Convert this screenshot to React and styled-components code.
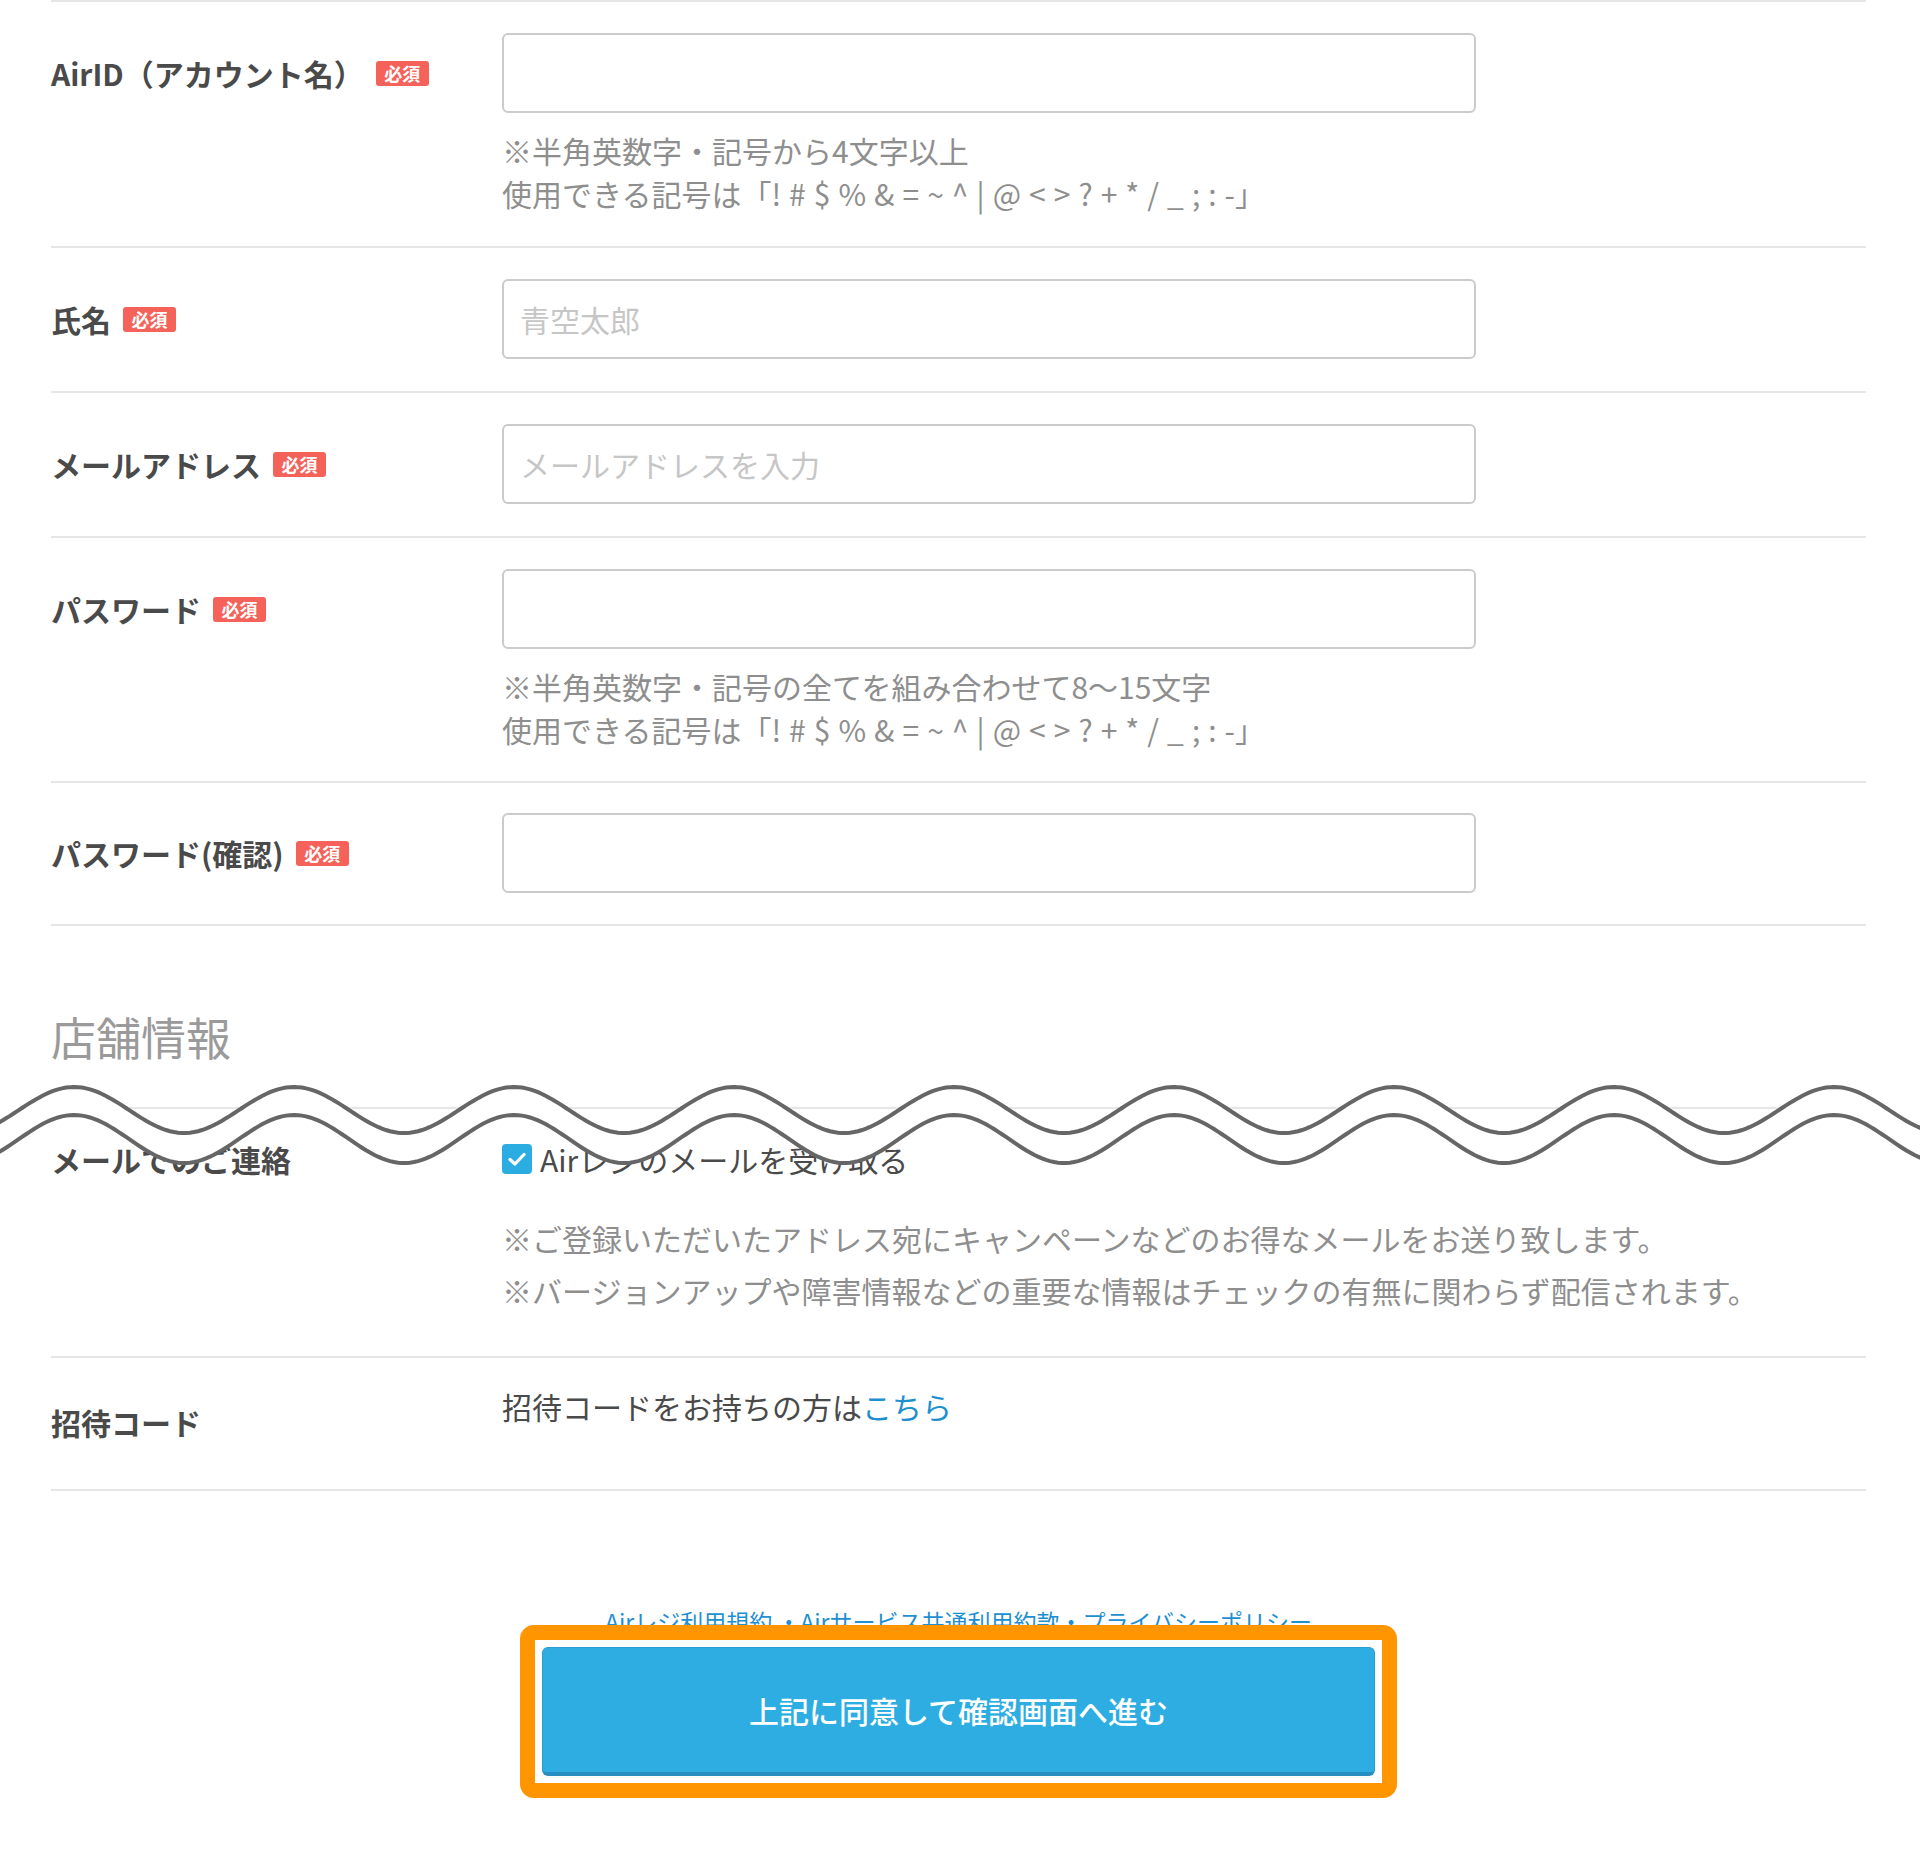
import React from 'react';
import styled, { createGlobalStyle } from 'styled-components';

const GlobalStyle = createGlobalStyle`
  html, body { margin: 0; padding: 0; background: #fff; }
  body {
    font-family: "Noto Sans CJK JP", "Noto Sans", sans-serif;
    color: #4a4a4a;
  }
  * { box-sizing: border-box; }
`;

const Page = styled.div`
  position: relative;
  width: 1920px;
  height: 1870px;
  overflow: hidden;
  background: #fff;
`;

const Content = styled.div`
  width: 1815px;
  margin-left: 51px;
`;

const Table = styled.div`
  border-top: 2px solid #e6e6e6;
`;

const Row = styled.div`
  display: grid;
  grid-template-columns: 451px 1fr;
  padding: ${(p) => p.$pad || '31px 0 32px'};
  border-bottom: 2px solid #e6e6e6;
`;

const LabelCell = styled.div`
  display: flex;
  align-items: center;
  gap: 12px;
  height: ${(p) => p.$h || '80px'};
  margin-top: ${(p) => p.$offset || '0'};
  font-size: 30px;
  font-weight: 700;
  color: #4a4a4a;
  white-space: nowrap;
`;

const Badge = styled.span`
  display: inline-flex;
  align-items: center;
  justify-content: center;
  width: 53px;
  height: 25px;
  border-radius: 3px;
  background: #f4625a;
  color: #fff;
  font-size: 18px;
  font-weight: 700;
  line-height: 1;
`;

const Field = styled.div`
  display: flex;
  flex-direction: column;
`;

const TextInput = styled.input`
  display: block;
  width: 974px;
  height: 80px;
  border: 2px solid #cbcbcb;
  border-radius: 6px;
  padding: 0 16px;
  font-size: 30px;
  font-family: inherit;
  color: #4a4a4a;
  background: #fff;
  outline: none;
  &::placeholder {
    color: #c6c6c6;
  }
`;

const Help = styled.p`
  margin: 16px 0 0;
  font-size: 30px;
  line-height: 43px;
  color: #8e8e8e;
  white-space: pre;
  word-spacing: 1.3px;
`;

const SectionTitle = styled.h2`
  margin: 77px 0 36px;
  font-size: 45px;
  line-height: 68px;
  font-weight: 400;
  color: #9a9a9a;
`;

const CheckLine = styled.label`
  display: flex;
  align-items: center;
  gap: 8px;
  height: 43px;
  font-size: 30px;
  color: #4a4a4a;
`;

const CheckBox = styled.span`
  display: inline-flex;
  align-items: center;
  justify-content: center;
  width: 30px;
  height: 30px;
  border-radius: 4px;
  background: #2cade2;
`;

const Notes = styled.p`
  margin: 32px 0 0;
  font-size: 30px;
  line-height: 52px;
  color: #8e8e8e;
`;

const PlainText = styled.p`
  margin: 0;
  font-size: 30px;
  line-height: 43px;
  color: #4a4a4a;
`;

const Link = styled.a`
  color: #1e8fcf;
  text-decoration: none;
`;

const Footer = styled.div`
  display: flex;
  flex-direction: column;
  align-items: center;
`;

const Terms = styled.p`
  margin: 112px 0 0;
  font-size: 23px;
  line-height: 36px;
  color: #1e8fcf;
`;

const Highlight = styled.div`
  position: relative;
  margin-top: -14px;
  padding: 7px;
  border: 15px solid #ff9500;
  border-radius: 14px;
  background: #fff;
`;

const SubmitButton = styled.button`
  display: flex;
  align-items: center;
  justify-content: center;
  width: 833px;
  height: 129px;
  border: 1px solid #2a9dd0;
  border-bottom: 4px solid #2790c0;
  border-radius: 6px;
  background: #2dade1;
  color: #fff;
  font-family: inherit;
  font-size: 30px;
  font-weight: 500;
  cursor: pointer;
`;

const WaveLayer = styled.svg`
  position: absolute;
  left: 0;
  top: 1080px;
  width: 1920px;
  height: 90px;
  pointer-events: none;
`;

const wavePoints = (c, a, off = 74, period = 220) => {
  const pts = [];
  for (let x = -10; x <= 1935; x += 4) {
    const y = c - a * Math.cos((2 * Math.PI * (x - off)) / period);
    pts.push([x, y]);
  }
  return pts;
};

const toPath = (pts) =>
  pts.map(([x, y], i) => `${i ? 'L' : 'M'}${x.toFixed(1)} ${y.toFixed(2)}`).join(' ');

function Wave() {
  const top = wavePoints(30, 23);
  const bottom = wavePoints(59, 24);
  const band =
    toPath(top) +
    ' ' +
    bottom
      .slice()
      .reverse()
      .map(([x, y]) => `L${x.toFixed(1)} ${y.toFixed(2)}`)
      .join(' ') +
    ' Z';
  return (
    <WaveLayer viewBox="0 0 1920 90">
      <path d={band} fill="#fff" />
      <path d={toPath(top)} fill="none" stroke="#666" strokeWidth="4" />
      <path d={toPath(bottom)} fill="none" stroke="#666" strokeWidth="4" />
    </WaveLayer>
  );
}

const Label = ({ children, required, ...rest }) => (
  <LabelCell {...rest}>
    <span>{children}</span>
    {required && <Badge>必須</Badge>}
  </LabelCell>
);

const SYMBOLS = '使用できる記号は「! # $ % & = ~ ^ | @ < > ? + * / _ ; : -」';

export default function App() {
  return (
    <Page>
      <GlobalStyle />
      <Content>
        <Table>
          <Row $pad="31px 0 31px">
            <Label required>AirID（アカウント名）</Label>
            <Field>
              <TextInput type="text" />
              <Help>
                {'※半角英数字・記号から4文字以上'}
                {'\n'}
                {SYMBOLS}
              </Help>
            </Field>
          </Row>
          <Row>
            <Label required>氏名</Label>
            <Field>
              <TextInput type="text" placeholder="青空太郎" />
            </Field>
          </Row>
          <Row>
            <Label required>メールアドレス</Label>
            <Field>
              <TextInput type="text" placeholder="メールアドレスを入力" />
            </Field>
          </Row>
          <Row $pad="31px 0 30px">
            <Label required>パスワード</Label>
            <Field>
              <TextInput type="password" />
              <Help>
                {'※半角英数字・記号の全てを組み合わせて8〜15文字'}
                {'\n'}
                {SYMBOLS}
              </Help>
            </Field>
          </Row>
          <Row $pad="30px 0 31px">
            <Label required>パスワード(確認)</Label>
            <Field>
              <TextInput type="password" />
            </Field>
          </Row>
        </Table>

        <SectionTitle>店舗情報</SectionTitle>

        <Table>
          <Row $pad="28px 0 40px">
            <Label $h="43px">メールでのご連絡</Label>
            <Field>
              <CheckLine>
                <CheckBox>
                  <svg width="20" height="16" viewBox="0 0 20 16">
                    <path
                      d="M3 8.5 L8 13 L17 3.5"
                      fill="none"
                      stroke="#fff"
                      strokeWidth="3.2"
                      strokeLinecap="round"
                      strokeLinejoin="round"
                    />
                  </svg>
                </CheckBox>
                Airレジのメールを受け取る
              </CheckLine>
              <Notes>
                ※ご登録いただいたアドレス宛にキャンペーンなどのお得なメールをお送り致します。
                <br />
                ※バージョンアップや障害情報などの重要な情報はチェックの有無に関わらず配信されます。
              </Notes>
            </Field>
          </Row>
          <Row $pad="27px 0 46px">
            <Label $h="43px" $offset="15px">
              招待コード
            </Label>
            <Field>
              <PlainText>
                招待コードをお持ちの方は<Link href="#">こちら</Link>
              </PlainText>
            </Field>
          </Row>
        </Table>

        <Footer>
          <Terms>
            <Link href="#">Airレジ利用規約</Link> ・<Link href="#">Airサービス共通利用約款</Link>・
            <Link href="#">プライバシーポリシー</Link>
          </Terms>
          <Highlight>
            <SubmitButton type="button">上記に同意して確認画面へ進む</SubmitButton>
          </Highlight>
        </Footer>
      </Content>
      <Wave />
    </Page>
  );
}
